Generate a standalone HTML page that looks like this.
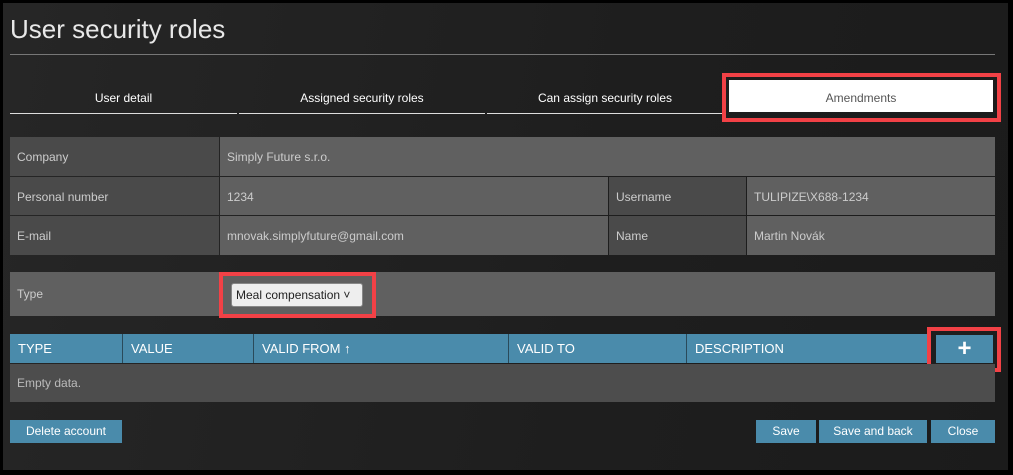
<!DOCTYPE html>
<html><head><meta charset="utf-8"><style>
*{margin:0;padding:0;box-sizing:border-box}
body{width:1013px;height:475px;background:#000;font-family:"Liberation Sans",sans-serif;position:relative;overflow:hidden}
#f{position:absolute;left:3px;top:3px;width:1005px;height:467px;background:linear-gradient(100deg,#262626 0%,#222 30%,#1e1e1e 60%,#1b1b1b 100%)}
.a{position:absolute}
.tab{position:absolute;top:82px;height:32px;line-height:33px;text-align:center;font-size:12px;color:#fff;border-bottom:1px solid #ddd}
.c{position:absolute;font-size:12px;line-height:40px;padding-left:7px;color:#ccc}
.l{background:#4a4a4a}.v{background:#606060}
.h{position:absolute;top:334px;height:29px;line-height:29px;background:#4a8bab;color:#fff;font-size:13px;padding-left:8px;border-right:1px solid #2a4a5a}
.b{position:absolute;top:420px;height:23px;line-height:23px;background:#4a8bab;color:#fff;font-size:12px;text-align:center}
.red{position:absolute;border:4px solid #f24146}
</style></head><body><div id="f"></div>
<div class="a" style="left:10px;top:14px;font-size:26px;color:#e8e8e8">User security roles</div>
<div class="a" style="left:10px;top:54px;width:985px;height:1px;background:#777"></div>
<div class="tab" style="left:10px;width:227px">User detail</div>
<div class="tab" style="left:239px;width:246px">Assigned security roles</div>
<div class="tab" style="left:487px;width:236px">Can assign security roles</div>
<div class="red" style="left:722px;top:73px;width:279px;height:49px"></div>
<div class="a" style="left:729px;top:80px;width:264px;height:32px;background:#fff;color:#555;font-size:12px;line-height:36px;text-align:center">Amendments</div>

<div class="c l" style="left:10px;top:137px;width:209px;height:39px">Company</div>
<div class="c v" style="left:220px;top:137px;width:775px;height:39px">Simply Future s.r.o.</div>
<div class="c l" style="left:10px;top:177px;width:209px;height:38px">Personal number</div>
<div class="c v" style="left:220px;top:177px;width:388px;height:38px">1234</div>
<div class="c l" style="left:609px;top:177px;width:137px;height:38px">Username</div>
<div class="c v" style="left:747px;top:177px;width:248px;height:38px">TULIPIZE\X688-1234</div>
<div class="c l" style="left:10px;top:216px;width:209px;height:39px">E-mail</div>
<div class="c v" style="left:220px;top:216px;width:388px;height:39px">mnovak.simplyfuture@gmail.com</div>
<div class="c l" style="left:609px;top:216px;width:137px;height:39px">Name</div>
<div class="c v" style="left:747px;top:216px;width:248px;height:39px">Martin Novák</div>

<div class="c v" style="left:10px;top:272px;width:985px;height:44px;line-height:44px;padding-left:7px;color:#ccc">Type</div>
<div class="a" style="left:231px;top:283px;width:132px;height:24px;background:#eee;border:1px solid #888;border-radius:3px;font-size:12px;line-height:22px;padding-left:4px;color:#222">Meal compensation ˅</div>
<div class="red" style="left:219px;top:272px;width:157px;height:46px"></div>

<div class="h" style="left:10px;width:113px">TYPE</div>
<div class="h" style="left:123px;width:131px">VALUE</div>
<div class="h" style="left:254px;width:255px">VALID FROM ↑</div>
<div class="h" style="left:509px;width:178px">VALID TO</div>
<div class="h" style="left:687px;width:240px;border-right:none">DESCRIPTION</div>
<div class="a" style="left:927px;top:327px;width:74px;height:45px;background:#1e1e1e"></div>
<div class="a" style="left:936px;top:335px;width:57px;height:28px;background:#4a8bab"></div>
<div class="red" style="left:927px;top:327px;width:74px;height:45px"></div>
<div class="a" style="left:936px;top:334px;width:57px;height:30px;color:#fff;font-size:24px;line-height:30px;text-align:center;font-weight:bold">+</div>
<div class="a" style="left:10px;top:364px;width:985px;height:38px;background:#4d4d4d;color:#bbb;font-size:12px;line-height:38px;padding-left:7px">Empty data.</div>

<div class="b" style="left:10px;width:112px">Delete account</div>
<div class="b" style="left:756px;width:60px">Save</div>
<div class="b" style="left:819px;width:108px">Save and back</div>
<div class="b" style="left:931px;width:64px">Close</div>
</body></html>
